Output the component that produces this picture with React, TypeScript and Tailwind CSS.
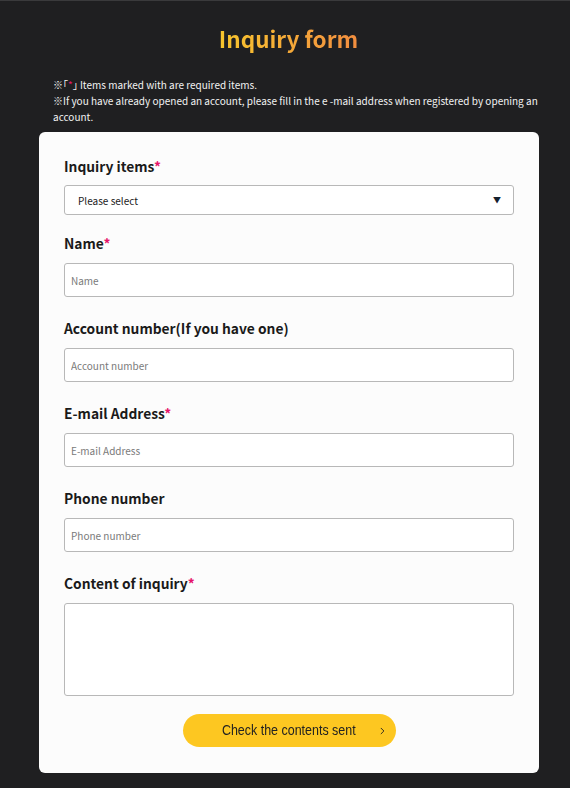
import { ChevronRight } from "lucide-react";

type Field = {
  label: string;
  required?: boolean;
  placeholder?: string;
  kind: "select" | "input" | "textarea";
};

const fields: Field[] = [
  { label: "Inquiry items", required: true, kind: "select" },
  { label: "Name", required: true, placeholder: "Name", kind: "input" },
  { label: "Account number(If you have one)", placeholder: "Account number", kind: "input" },
  { label: "E-mail Address", required: true, placeholder: "E-mail Address", kind: "input" },
  { label: "Phone number", placeholder: "Phone number", kind: "input" },
  { label: "Content of inquiry", required: true, kind: "textarea" },
];

function FormField({ field, gap }: { field: Field; gap: string }) {
  return (
    <div className={gap}>
      <label className="block text-[13.8px] leading-5 font-bold text-[#1a1a1a]">
        {field.label}
        {field.required && <span className="text-[#e6156b]">*</span>}
      </label>
      {field.kind === "select" && (
        <div className="mt-[9px] h-[30px] flex items-center justify-between rounded-[3px] border border-[#b8b8b8] bg-white pl-[13px] pr-[12px]">
          <span className="text-[10px] text-[#222]">Please select</span>
          <span className="text-[8px] text-[#14202e]">▼</span>
        </div>
      )}
      {field.kind === "input" && (
        <input
          placeholder={field.placeholder}
          className="mt-[10px] block w-full h-[34px] rounded-[3px] border border-[#b8b8b8] bg-white px-[6px] text-[10px] outline-none placeholder:text-[#7a7a7a]"
        />
      )}
      {field.kind === "textarea" && (
        <textarea className="mt-[10px] block w-full h-[93px] resize-none rounded-[3px] border border-[#b8b8b8] bg-white px-[6px] text-[10px] outline-none" />
      )}
    </div>
  );
}

export default function App() {
  return (
    <div
      className="min-h-[788px] bg-[#1f1f21] border-t border-[#3a3a3c] pb-[15px]"
      style={{ fontFamily: '"Noto Sans CJK JP", "Noto Sans", sans-serif' }}
    >
      <h1 className="pt-[21px] pl-[7px] text-center text-[22.5px] leading-[32px] font-bold">
        <span className="bg-gradient-to-r from-[#f7c52c] to-[#f18d3f] bg-clip-text text-transparent">
          Inquiry form
        </span>
      </h1>
      <div className="mt-[23px] pl-[53px] pr-[30px] text-[10px] leading-[16px] text-[#f2f2f2]">
        <p>
          ※｢<span className="text-[#e6156b]">*</span>｣ Items marked with are required items.
        </p>
        <p>
          ※If you have already opened an account, please fill in the e -mail address when registered by opening an account.
        </p>
      </div>
      <div className="ml-[39px] w-[500px] mt-[7px] rounded-[6px] bg-[#fcfcfc] px-[25px] pt-[24px] pb-[26px]">
        {fields.map((f, i) => (
          <FormField
            key={f.label}
            field={f}
            gap={i === 0 ? "" : i === 1 ? "mt-[18px]" : "mt-[21px]"}
          />
        ))}
        <div className="mt-[18px] flex justify-center">
          <button
            className="relative h-[33px] w-[213px] rounded-full bg-[#fdc721] text-[14.5px] text-[#222]"
            style={{ fontFamily: '"Liberation Sans", Arial, sans-serif' }}
          >
            <span className="inline-block scale-x-[0.86]">Check the contents sent</span>
            <ChevronRight className="absolute right-[8px] top-1/2 -translate-y-1/2" size={11} strokeWidth={2} />
          </button>
        </div>
      </div>
    </div>
  );
}
